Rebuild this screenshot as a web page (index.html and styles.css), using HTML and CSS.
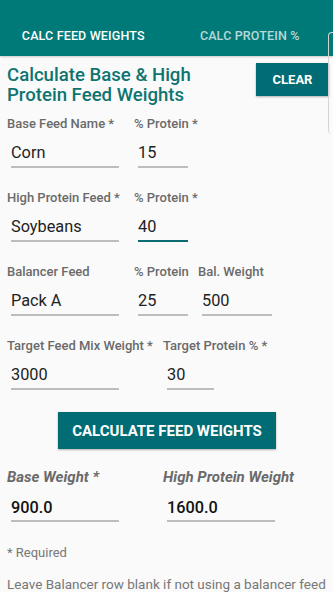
FILE: index.html
```html
<!DOCTYPE html>
<html>
<head>
<meta charset="utf-8">
<link rel="stylesheet" href="styles.css">
</head>
<body>
<div class="app">
  <header class="tabs">
    <div class="tab active">CALC FEED WEIGHTS</div>
    <div class="tab">CALC PROTEIN %</div>
  </header>
  <div class="scroll-thumb"></div>
  <main class="content">
    <div class="title-row">
      <h1 class="title">Calculate Base &amp; High Protein Feed Weights</h1>
      <button class="btn btn-clear">CLEAR</button>
    </div>

    <div class="row">
      <div class="field w127">
        <div class="label">Base Feed Name *</div>
        <div class="input w108">Corn</div>
      </div>
      <div class="field">
        <div class="label">% Protein *</div>
        <div class="input w50">15</div>
      </div>
    </div>

    <div class="row">
      <div class="field w127">
        <div class="label">High Protein Feed *</div>
        <div class="input w108">Soybeans</div>
      </div>
      <div class="field">
        <div class="label">% Protein *</div>
        <div class="input w50 focused">40</div>
      </div>
    </div>

    <div class="row">
      <div class="field w127">
        <div class="label">Balancer Feed</div>
        <div class="input w108">Pack A</div>
      </div>
      <div class="field w64">
        <div class="label">% Protein</div>
        <div class="input w50">25</div>
      </div>
      <div class="field">
        <div class="label">Bal. Weight</div>
        <div class="input w70">500</div>
      </div>
    </div>

    <div class="row">
      <div class="field w156">
        <div class="label">Target Feed Mix Weight *</div>
        <div class="input w108">3000</div>
      </div>
      <div class="field">
        <div class="label">Target Protein % *</div>
        <div class="input w47">30</div>
      </div>
    </div>

    <div class="btn-wrap">
      <button class="btn btn-calc">CALCULATE FEED WEIGHTS</button>
    </div>

    <div class="row results">
      <div class="field w156">
        <div class="label big">Base Weight *</div>
        <div class="input w108 result">900.0</div>
      </div>
      <div class="field">
        <div class="label big">High Protein Weight</div>
        <div class="input w108 result">1600.0</div>
      </div>
    </div>

    <p class="note req">* Required</p>
    <p class="note hint">Leave Balancer row blank if not using a balancer feed</p>
  </main>
</div>
</body>
</html>
```
FILE: styles.css
```css
* { box-sizing: border-box; }
html, body {
  margin: 0;
  padding: 0;
  background: #fafafa;
  font-family: Roboto, "Noto Sans", Arial, sans-serif;
  overflow: hidden;
}
.app {
  position: relative;
  width: 333px;
  height: 592px;
  overflow: hidden;
}
.tabs {
  height: 56px;
  background: #007a78;
  display: flex;
  align-items: flex-end;
  padding-bottom: 12px;
  box-shadow: 0 1px 2px rgba(0,0,0,0.2);
}
.tab {
  flex: 1;
  text-align: center;
  color: rgba(255,255,255,0.72);
  font-size: 12.5px;
  font-weight: 500;
  line-height: 16px;
  letter-spacing: 0.15px;
}
.tab.active { color: #fff; }
.scroll-thumb {
  position: absolute;
  top: 32px;
  right: 0;
  width: 5px;
  height: 102px;
  border-left: 1px solid #d4d4d4;
  border-top: 1px solid #d4d4d4;
  border-radius: 4px 0 0 4px;
}
.content {
  padding: 0 4px 0 7px;
}
.title-row {
  display: flex;
  justify-content: space-between;
  align-items: flex-start;
  margin-top: 7px;
}
.title {
  margin: 0;
  padding-top: 2px;
  font-size: 18.6px;
  line-height: 20px;
  font-weight: 500;
  color: #0e7470;
  width: 220px;
}
.btn {
  border: none;
  color: #fff;
  font-family: inherit;
  font-weight: 700;
  background: #016c74;
  padding: 0;
  box-shadow: 0 1px 2px rgba(0,0,0,0.3);
}
.btn-clear {
  width: 73px;
  height: 33px;
  font-size: 13px;
}
.row {
  display: flex;
  margin-top: 22px;
}
.title-row + .row { margin-top: 11px; }
.field { display: flex; flex-direction: column; }
.w127 { width: 127px; }
.w64 { width: 64px; }
.w156 { width: 156px; }
.label {
  font-size: 13px;
  line-height: 16px;
  font-weight: 500;
  color: #6a6a6a;
  white-space: nowrap;
}
.input {
  margin-left: 4px;
  height: 36px;
  padding: 11px 0 0 0;
  font-size: 16.3px;
  line-height: 20px;
  color: #222;
  border-bottom: 2px solid #bdbdbd;
}
.input.focused { border-bottom-color: #0b6b73; }
.w108 { width: 108px; }
.w50 { width: 50px; }
.w70 { width: 70px; }
.w47 { width: 47px; }
.btn-wrap {
  display: flex;
  margin-top: 22px;
  padding-left: 51px;
}
.btn-calc {
  width: 218px;
  height: 37px;
  font-size: 15px;
}
.row.results { margin-top: 19px; }
.label.big {
  font-size: 15px;
  line-height: 18px;
  font-style: italic;
  font-weight: 700;
  color: #6a6a6a;
}
.input.result {
  height: 36px;
  padding-top: 12px;
  font-weight: 500;
  color: #111;
}
.note {
  margin: 0;
  color: #777;
}
.req {
  margin-top: 23px;
  font-size: 13px;
  line-height: 16px;
}
.hint {
  margin-top: 14px;
  font-size: 13.5px;
  line-height: 18px;
  white-space: nowrap;
}
```
